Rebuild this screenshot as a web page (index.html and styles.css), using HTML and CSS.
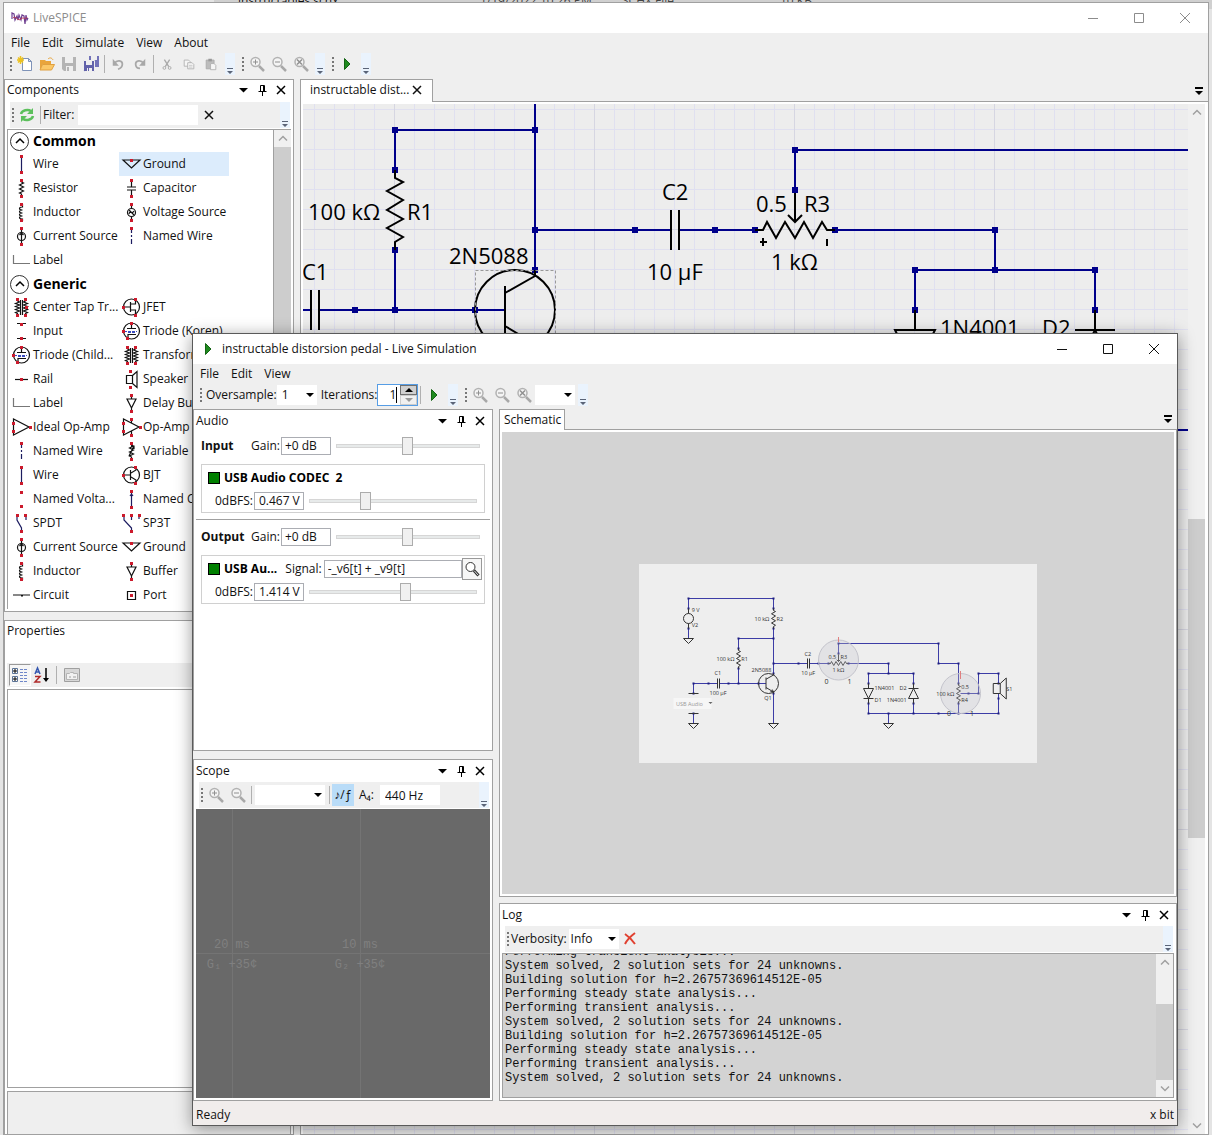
FILE: index.html
```html
<!DOCTYPE html>
<html lang="en">

<head>
    <meta charset="UTF-8">
    <meta name="viewport" content="width=device-width, initial-scale=1.0">
    <title>LiveSPICE</title>
    <link rel="stylesheet" href="styles.css">
</head>

<body>
    <!-- shared icons and circuit symbols -->
    <svg class="defs" aria-hidden="true">
        <!-- window chrome -->
        <symbol id="i-min" viewBox="0 0 12 12"><path class="line" d="M1 6.500h10" /></symbol>
        <symbol id="i-max" viewBox="0 0 12 12"><path class="line" d="M1.500 1.500h9v9h-9z" /></symbol>
        <symbol id="i-x" viewBox="0 0 12 12"><path class="line" d="M1 1l10 10M11 1L1 11" /></symbol>
        <symbol id="i-down" viewBox="0 0 12 12"><path fill="currentColor" d="M2 4h9L6.500 8.500z" /></symbol>
        <symbol id="i-pin" viewBox="0 0 12 12"><path class="line" d="M4.500 7V1.500h4V7M2.500 7.500h8M6.500 8v4" /><path class="line" d="M7.500 2v5" /></symbol>
        <symbol id="i-close" viewBox="0 0 12 12"><path class="thick" d="M2 2l8 8M10 2l-8 8" /></symbol>
        <symbol id="i-over" viewBox="0 0 8 8"><path fill="#5a6478" d="M1 1h6v1H1zM1 4h6L4 7z" /></symbol>
        <symbol id="i-tabs" viewBox="0 0 10 10"><path fill="#000" d="M1 1h8v2H1zM1 5h8L5 9z" /></symbol>
        <symbol id="i-up" viewBox="0 0 10 10"><path class="thick" d="M1 7l4-4 4 4" /></symbol>
        <symbol id="i-dn" viewBox="0 0 10 10"><path class="thick" d="M1 3l4 4 4-4" /></symbol>
        <!-- toolbar -->
        <symbol id="i-new" viewBox="0 0 16 16"><path fill="#fff" stroke="#7f93b8" d="M5.500 2.500h6l3 3v9h-9z" /><path fill="#dfe8f5" stroke="#7f93b8" d="M11.500 2.500v3h3z" /><path stroke="#edc21e" stroke-width="1.500" d="M3.500 0v8M0 4h7M1 1.500l5 5M6 1.500l-5 5" /></symbol>
        <symbol id="i-open" viewBox="0 0 16 16"><path fill="#e9a53c" d="M1 4h5l1 1h5v3H4l-3 6z" /><path fill="#fbc868" stroke="#e0a040" d="M3.500 8.500h12l-3 5.500H1z" /><path fill="none" stroke="#e9a53c" d="M9 3c2-2 4-1 5 1" /></symbol>
        <symbol id="i-save" viewBox="0 0 16 16"><path fill="#b4b4b4" d="M1 1h14v14H3l-2-2z" /><path fill="#efefef" d="M4 1h8v6H4zM5 10h7v5H5z" /><path fill="#b4b4b4" d="M6 11h2v4H6z" /></symbol>
        <symbol id="i-saveall" viewBox="0 0 16 16"><path fill="#7272b8" d="M6 0h10v11H6z" /><path fill="#efefef" d="M8 0h6v4H8z" /><path fill="#6262aa" stroke="#efefef" d="M.500 4.500h11v11h-10l-1-1z" /><path fill="#efefef" d="M3 5h6v4H3zM4 12h5v4H4z" /><path fill="#6262aa" d="M5 12h1v3H5z" /></symbol>
        <symbol id="i-undo" viewBox="0 0 16 16"><path fill="none" stroke="#a8a8a8" stroke-width="2" d="M4 7c3-4 9-3 9 1 0 3-2 5-5 6" /><path fill="#a8a8a8" d="M2 2v8h7z" /></symbol>
        <symbol id="i-redo" viewBox="0 0 16 16"><path fill="none" stroke="#a8a8a8" stroke-width="2" d="M12 7c-3-4-9-3-9 1 0 3 2 5 5 5" /><path fill="#a8a8a8" d="M14 2v8H7z" /></symbol>
        <symbol id="i-cut" viewBox="0 0 16 16"><path fill="none" stroke="#a8a8a8" stroke-width="1.500" d="M5 3l5 8M11 3l-5 8" /><circle cx="5" cy="12.500" r="1.600" fill="none" stroke="#a8a8a8" /><circle cx="11" cy="12.500" r="1.600" fill="none" stroke="#a8a8a8" /></symbol>
        <symbol id="i-copy" viewBox="0 0 16 16"><path fill="#f6f6f6" stroke="#b0b0b0" d="M2.500 3.500h5l2 2v5h-7z" /><path fill="#f6f6f6" stroke="#b0b0b0" d="M6.500 6.500h5l2 2v5h-7z" /><path stroke="#c4c4c4" d="M8 9.500h4M8 11.500h4" /></symbol>
        <symbol id="i-paste" viewBox="0 0 16 16"><path fill="#bcbcbc" stroke="#aaa" d="M2.500 3.500h9v10h-9z" /><path fill="#999" d="M5 2h4v3H5z" /><path fill="#f6f6f6" stroke="#b0b0b0" d="M7.500 7.500h4l2 2v5h-6z" /></symbol>
        <symbol id="i-zoomin" viewBox="0 0 16 16"><circle cx="6.500" cy="6" r="4.500" fill="#f4f4f4" stroke="#b2b2b2" stroke-width="1.500" /><path stroke="#a8a8a8" stroke-width="2.500" d="M10 10l5 5" /><path stroke="#909090" d="M4 6h5M6.500 3.500v5" /></symbol>
        <symbol id="i-zoomout" viewBox="0 0 16 16"><circle cx="6.500" cy="6" r="4.500" fill="#f4f4f4" stroke="#b2b2b2" stroke-width="1.500" /><path stroke="#a8a8a8" stroke-width="2.500" d="M10 10l5 5" /><path stroke="#909090" d="M4 6h5" /></symbol>
        <symbol id="i-zoomfit" viewBox="0 0 16 16"><circle cx="6.500" cy="6" r="4.500" fill="#f4f4f4" stroke="#b2b2b2" stroke-width="1.500" /><path stroke="#a8a8a8" stroke-width="2.500" d="M10 10l5 5" /><path stroke="#909090" stroke-width="1.500" d="M4 3.500l5 5M9 3.500l-5 5" /></symbol>
        <symbol id="i-play" viewBox="0 0 16 16"><path fill="#1f8a1f" stroke="#146414" d="M5.500 2.500v11L11 8z" /></symbol>
        <symbol id="i-refresh" viewBox="0 0 16 16"><path fill="none" stroke="#5cc05c" stroke-width="2.500" d="M2 7c1-4 7-5 10-3M14 9c-1 4-7 5-10 3" /><path fill="#5cc05c" d="M14 1v6H8zM2 15V9h6z" /></symbol>
        <symbol id="i-find" viewBox="0 0 16 16"><circle cx="6.500" cy="6" r="4.500" fill="#fff" stroke="#333" /><path stroke="#333" stroke-width="3" d="M10 9.500l4.500 5" /><path stroke="#ddd" d="M10.500 10l3.500 4" /></symbol>
        <symbol id="i-del" viewBox="0 0 16 16"><path fill="none" stroke="#e04030" stroke-width="2" d="M3 3c3 2 7 6 10 10M13 2C9 5 5 9 3 13" /></symbol>
        <symbol id="i-cat" viewBox="0 0 18 18"><path fill="#fff" stroke="#5b7396" d="M1.500 2.500h5v5h-5zM1.500 10.500h5v5h-5z" /><path stroke="#000" d="M2 5h4M4 3v4M2 13h4M4 11v4" /><path stroke="#6f87c9" stroke-dasharray="3 1" d="M9 3.500h8M9 6.500h8M9 9.500h8M9 12.500h8M9 15.500h8" /></symbol>
        <symbol id="i-az" viewBox="0 0 18 18"><path fill="none" stroke="#3557b0" stroke-width="1.500" d="M2 8l2.500-6L7 8M3 6h3" /><path fill="none" stroke="#b02a2a" stroke-width="1.500" d="M2 10.500h5L2 16h5.500" /><path stroke="#000" stroke-width="1.500" d="M13 2v12" /><path d="M10 12h6l-3 4z" /></symbol>
        <symbol id="i-pages" viewBox="0 0 18 18"><path fill="#d8d8d8" stroke="#a0a0a0" d="M1.500 2.500h15v13h-15z" /><path fill="#f2f2f2" stroke="#b4b4b4" d="M3.500 7.500h3l1-1h3v1h4v6h-11z" /><path stroke="#a0a0a0" d="M6 11h2M10 11h3" /></symbol>
        <!-- component list, 24x24 -->
        <symbol id="c-wire" viewBox="0 0 24 24"><path class="w" d="M12.500 4v16" /><path class="pin" d="M11 3h3v3h-3zM11 19h3v3h-3z" /></symbol>
        <symbol id="c-nwire" viewBox="0 0 24 24"><path class="w" stroke-dasharray="5 2 2 2" d="M12.500 4v17" /><path class="pin" d="M11 3h3v3h-3z" /></symbol>
        <symbol id="c-gnd" viewBox="0 0 24 24"><path class="k" d="M4 8h17l-8.500 8z" /><path class="pin" d="M11 7h3v3h-3z" /></symbol>
        <symbol id="c-res" viewBox="0 0 24 24"><path class="k" d="M12.500 4v2l2 1-4 2 4 2-4 2 4 2-4 2 2 1v3" /><path class="pin" d="M11 3h3v3h-3zM11 19h3v3h-3z" /></symbol>
        <symbol id="c-varres" viewBox="0 0 24 24"><path class="k" d="M12.500 4v2l2 1-4 2 4 2-4 2 4 2-4 2 2 1v3M10 17l5-10M15 10V7h-3" /><path class="pin" d="M11 3h3v3h-3zM11 19h3v3h-3z" /></symbol>
        <symbol id="c-cap" viewBox="0 0 24 24"><path class="k" d="M12.500 4v7M8 11h9M8 14h9M12.500 14v7" /><path class="pin" d="M11 3h3v3h-3zM11 19h3v3h-3z" /></symbol>
        <symbol id="c-ind" viewBox="0 0 24 24"><path class="k" d="M13.500 4v3c-4 0-4 3 0 3-4 0-4 3 0 3-4 0-4 3 0 3-4 0-4 3 0 3v2" /><path class="pin" d="M11 3h3v3h-3zM11 19h3v3h-3z" /></symbol>
        <symbol id="c-vs" viewBox="0 0 24 24"><circle class="k" cx="12.500" cy="12.500" r="4" /><path class="k" d="M12.500 4v4M12.500 17v4M10 14c1-4 3 1 5-3M10 10l5 5" /><path class="pin" d="M11 3h3v3h-3zM11 19h3v3h-3z" /></symbol>
        <symbol id="c-cs" viewBox="0 0 24 24"><circle class="k" cx="12.500" cy="12.500" r="4" /><path class="k" d="M12.500 4v17M10.500 11l2-2 2 2" /><path class="pin" d="M11 3h3v3h-3zM11 19h3v3h-3z" /></symbol>
        <symbol id="c-label" viewBox="0 0 24 24"><path class="g" d="M4.500 7v8.500H21" /></symbol>
        <symbol id="c-xfmr" viewBox="0 0 24 24"><path class="k" d="M11.500 5v15M13.500 5v15M8.500 4v2l2 1-4 1.500 4 1.500-4 1.500 4 1.500-4 1.500 4 1.500-4 1.500 2 1v2M16.500 4v2l-2 1 4 1.500-4 1.500 4 1.500-4 1.500 4 1.500-4 1.500 4 1.500-2 1v2" /><path class="pin" d="M7 3h3v3H7zM7 19h3v3H7zM15 3h3v3h-3zM15 19h3v3h-3z" /></symbol>
        <symbol id="c-ctap" viewBox="0 0 24 24"><use href="#c-xfmr" /><path class="pin" d="M16 11h3v3h-3z" /></symbol>
        <symbol id="c-input" viewBox="0 0 24 24"><path class="k" d="M8 4.500h9M8 19.500h9" /><path class="pin" d="M11 4h3v3h-3zM11 18h3v3h-3z" /></symbol>
        <symbol id="c-jfet" viewBox="0 0 24 24"><circle class="k" cx="12.500" cy="12" r="8" /><path class="k" d="M5 12h6M11.500 7v10M12 9h4.500V5M12 15h4.500v4" /><path class="pin" d="M3 11h3v3H3zM15 3h3v3h-3zM15 19h3v3h-3z" /></symbol>
        <symbol id="c-bjt" viewBox="0 0 24 24"><circle class="k" cx="12.500" cy="12" r="8" /><path class="k" d="M5 12h6M11.500 7v10M12 10l5-3V5M12 14l5 3v2" /><path class="pin" d="M3 11h3v3H3zM15 3h3v3h-3zM15 19h3v3h-3z" /></symbol>
        <symbol id="c-triode" viewBox="0 0 24 24"><circle class="k" cx="12.500" cy="12" r="8" /><path class="k" d="M12.500 4v5M8 9.500h9M9 18v-2.500h8" /><path class="b" stroke-dasharray="3 1" d="M5 12.500h3h10M9 13.500h8" /><path class="pin" d="M11 3h3v3h-3zM3 11h3v3H3zM7 18h3v3H7z" /></symbol>
        <symbol id="c-rail" viewBox="0 0 24 24"><path class="k" d="M6 12.500h13" /><path class="pin" d="M11 11h3v3h-3z" /></symbol>
        <symbol id="c-speaker" viewBox="0 0 24 24"><path class="k" d="M7.500 8.500h6v8h-6zM13.500 8.500l4.500-4v16l-4.500-4" /><path class="pin" d="M10 3h3v3h-3zM10 19h3v3h-3z" /></symbol>
        <symbol id="c-buf" viewBox="0 0 24 24"><path class="k" d="M12.500 4v4M8 8h9l-4.500 9zM12.500 17v4" /><path class="pin" d="M11 3h3v3h-3zM11 19h3v3h-3z" /></symbol>
        <symbol id="c-iopamp" viewBox="0 0 24 24"><path class="k" d="M4.500 4v16L20 12z" /><path class="pin" d="M3 7h3v3H3zM3 15h3v3H3zM20 11h3v3h-3z" /></symbol>
        <symbol id="c-opamp" viewBox="0 0 24 24"><path class="k" d="M4.500 4v16L20 12zM12.500 4v4M12.500 16v5" /><path class="pin" d="M3 7h3v3H3zM3 15h3v3H3zM20 11h3v3h-3zM11 3h3v3h-3zM11 19h3v3h-3z" /></symbol>
        <symbol id="c-nv" viewBox="0 0 24 24"><path class="pin" d="M11 4h3v3h-3zM11 18h3v3h-3z" /></symbol>
        <symbol id="c-nc" viewBox="0 0 24 24"><path class="w" d="M12.500 4v16M11 9l1.500-2L14 9" /><path class="pin" d="M11 3h3v3h-3zM11 19h3v3h-3z" /></symbol>
        <symbol id="c-spdt" viewBox="0 0 24 24"><path class="w" d="M8 5v4l4.500 8v3M17 5v4" /><path class="pin" d="M7 3h3v3H7zM15 3h3v3h-3zM11 19h3v3h-3z" /></symbol>
        <symbol id="c-sp3t" viewBox="0 0 24 24"><path class="w" d="M5 5v4l7.500 8v3M12.500 5v4M20 5v3" /><path class="pin" d="M3 3h3v3H3zM11 3h3v3h-3zM19 3h3v3h-3zM11 19h3v3h-3z" /></symbol>
        <symbol id="c-circ" viewBox="0 0 24 24"><path class="k" d="M4 12h17M12 13h2" /></symbol>
        <symbol id="c-port" viewBox="0 0 24 24"><path class="k" d="M8.500 8.500h8v8h-8z" /><path class="pin" d="M11 11h3v3h-3z" /></symbol>
        <!-- schematic symbols, centred on the part -->
        <path id="s-res" d="M0 -40V-32L8 -28L-8 -19L8 -10L-8 0L8 9L-8 18L8 27L0 32V40" />
        <path id="s-cap" d="M-4 -20V20M4 -20V20" />
        <path id="s-gnd" d="M-20 0H20L0 20Z" />
        <path id="s-diode" d="M0 -40V-20M-20 -20H20L0 20ZM-20 20H20M0 20V40" />
        <g id="s-bjt"><circle r="40" /><path d="M-10 -24V24M-10 -17L20 -34V-40M-10 16L20 34V40M8 32L20 34L15 24" /></g>
    </svg>

    <!-- file list showing above the application -->
    <div class="behind">
        <span class="b-name">instructables.schx</span>
        <span class="b-date">1/19/2022 10:26 PM</span>
        <span class="b-type">SCHX File</span>
        <span>10 KB</span>
    </div>

    <div class="window main-window">
        <header class="titlebar inactive">
            <svg class="app-icon" viewBox="0 0 18 16"><path fill="none" stroke="#6d3d90" stroke-width="1.200" d="M1 9V3l2 1 1 6 2-4 1 4 1-5 2 5 1-5 2 1 1 8 1-9 1 5 1-2" /><path fill="none" stroke="#b9405a" d="M2 8c3-3 5 4 8 1s4 2 6-2" /></svg>
            <h1>LiveSPICE</h1>
            <div class="controls">
                <button aria-label="Minimize"><svg><use href="#i-min" /></svg></button>
                <button aria-label="Maximize"><svg><use href="#i-max" /></svg></button>
                <button aria-label="Close"><svg><use href="#i-x" /></svg></button>
            </div>
        </header>
        <nav class="menu">
            <button>File</button><button>Edit</button><button>Simulate</button><button>View</button><button>About</button>
        </nav>
        <div class="toolbars">
            <div class="toolbar">
                <i class="grip"></i>
                <button class="tool" aria-label="New"><svg><use href="#i-new" /></svg></button>
                <button class="tool" aria-label="Open"><svg><use href="#i-open" /></svg></button>
                <button class="tool" aria-label="Save"><svg><use href="#i-save" /></svg></button>
                <button class="tool" aria-label="Save all"><svg><use href="#i-saveall" /></svg></button>
                <i class="sep"></i>
                <button class="tool small" aria-label="Undo"><svg><use href="#i-undo" /></svg></button>
                <button class="tool small" aria-label="Redo"><svg><use href="#i-redo" /></svg></button>
                <i class="sep"></i>
                <button class="tool small" aria-label="Cut"><svg><use href="#i-cut" /></svg></button>
                <button class="tool small" aria-label="Copy"><svg><use href="#i-copy" /></svg></button>
                <button class="tool small" aria-label="Paste"><svg><use href="#i-paste" /></svg></button>
                <button class="overflow" aria-label="More"><svg><use href="#i-over" /></svg></button>
            </div>
            <div class="toolbar">
                <i class="grip"></i>
                <button class="tool" aria-label="Zoom in"><svg><use href="#i-zoomin" /></svg></button>
                <button class="tool" aria-label="Zoom out"><svg><use href="#i-zoomout" /></svg></button>
                <button class="tool" aria-label="Zoom fit"><svg><use href="#i-zoomfit" /></svg></button>
                <button class="overflow" aria-label="More"><svg><use href="#i-over" /></svg></button>
            </div>
            <div class="toolbar">
                <i class="grip"></i>
                <button class="tool" aria-label="Run"><svg><use href="#i-play" /></svg></button>
                <button class="overflow" aria-label="More"><svg><use href="#i-over" /></svg></button>
            </div>
        </div>

        <div class="dock">
            <div class="side">
                <section class="panel components">
                    <div class="panel-head">
                        <h2>Components</h2>
                        <button aria-label="Options"><svg><use href="#i-down" /></svg></button>
                        <button aria-label="Pin"><svg><use href="#i-pin" /></svg></button>
                        <button aria-label="Close"><svg><use href="#i-close" /></svg></button>
                    </div>
                    <div class="toolbar strip">
                        <i class="grip"></i>
                        <button class="tool" aria-label="Refresh"><svg><use href="#i-refresh" /></svg></button>
                        <i class="sep"></i>
                        <label for="filter">Filter:</label>
                        <input type="text" id="filter" class="filter">
                        <button class="tool clear" aria-label="Clear filter"><svg><use href="#i-close" /></svg></button>
                        <button class="overflow" aria-label="More"><svg><use href="#i-over" /></svg></button>
                    </div>
                    <div class="listbox">
                        <div class="groups">
                            <h3><button class="expander" aria-label="Collapse"><svg><use href="#i-up" /></svg></button>Common</h3>
                            <ul>
                                <li><svg><use href="#c-wire" /></svg><span>Wire</span></li>
                                <li class="selected"><svg><use href="#c-gnd" /></svg><span>Ground</span></li>
                                <li><svg><use href="#c-res" /></svg><span>Resistor</span></li>
                                <li><svg><use href="#c-cap" /></svg><span>Capacitor</span></li>
                                <li><svg><use href="#c-ind" /></svg><span>Inductor</span></li>
                                <li><svg><use href="#c-vs" /></svg><span>Voltage Source</span></li>
                                <li><svg><use href="#c-cs" /></svg><span>Current Source</span></li>
                                <li><svg><use href="#c-nwire" /></svg><span>Named Wire</span></li>
                                <li><svg><use href="#c-label" /></svg><span>Label</span></li>
                            </ul>
                            <h3><button class="expander" aria-label="Collapse"><svg><use href="#i-up" /></svg></button>Generic</h3>
                            <ul>
                                <li><svg><use href="#c-ctap" /></svg><span>Center Tap Tr...</span></li>
                                <li><svg><use href="#c-jfet" /></svg><span>JFET</span></li>
                                <li><svg><use href="#c-input" /></svg><span>Input</span></li>
                                <li><svg><use href="#c-triode" /></svg><span>Triode (Koren)</span></li>
                                <li><svg><use href="#c-triode" /></svg><span>Triode (Child...</span></li>
                                <li><svg><use href="#c-xfmr" /></svg><span>Transformer</span></li>
                                <li><svg><use href="#c-rail" /></svg><span>Rail</span></li>
                                <li><svg><use href="#c-speaker" /></svg><span>Speaker</span></li>
                                <li><svg><use href="#c-label" /></svg><span>Label</span></li>
                                <li><svg><use href="#c-buf" /></svg><span>Delay Buffer</span></li>
                                <li><svg><use href="#c-iopamp" /></svg><span>Ideal Op-Amp</span></li>
                                <li><svg><use href="#c-opamp" /></svg><span>Op-Amp</span></li>
                                <li><svg><use href="#c-nwire" /></svg><span>Named Wire</span></li>
                                <li><svg><use href="#c-varres" /></svg><span>Variable Re...</span></li>
                                <li><svg><use href="#c-wire" /></svg><span>Wire</span></li>
                                <li><svg><use href="#c-bjt" /></svg><span>BJT</span></li>
                                <li><svg><use href="#c-nv" /></svg><span>Named Volta...</span></li>
                                <li><svg><use href="#c-nc" /></svg><span>Named Curr...</span></li>
                                <li><svg><use href="#c-spdt" /></svg><span>SPDT</span></li>
                                <li><svg><use href="#c-sp3t" /></svg><span>SP3T</span></li>
                                <li><svg><use href="#c-cs" /></svg><span>Current Source</span></li>
                                <li><svg><use href="#c-gnd" /></svg><span>Ground</span></li>
                                <li><svg><use href="#c-ind" /></svg><span>Inductor</span></li>
                                <li><svg><use href="#c-buf" /></svg><span>Buffer</span></li>
                                <li><svg><use href="#c-circ" /></svg><span>Circuit</span></li>
                                <li><svg><use href="#c-port" /></svg><span>Port</span></li>
                                <li><svg><use href="#c-res" /></svg></li>
                                <li><svg><use href="#c-cap" /></svg></li>
                            </ul>
                        </div>
                        <div class="scroll">
                            <svg><use href="#i-up" /></svg>
                            <div class="track"><div class="thumb thumb-list"></div></div>
                        </div>
                    </div>
                </section>

                <section class="panel properties">
                    <div class="panel-head">
                        <h2>Properties</h2>
                    </div>
                    <div class="prop-tools">
                        <button class="pressed" aria-label="Categorized"><svg><use href="#i-cat" /></svg></button>
                        <button aria-label="Alphabetical"><svg><use href="#i-az" /></svg></button>
                        <i class="sep"></i>
                        <button aria-label="Property pages"><svg><use href="#i-pages" /></svg></button>
                    </div>
                    <div class="prop-grid"></div>
                    <div class="prop-help"></div>
                </section>
            </div>

            <div class="docs">
                <div class="tabs">
                    <div class="tab"><span>instructable dist...</span><button aria-label="Close tab"><svg><use href="#i-close" /></svg></button></div>
                    <button class="tab-list" aria-label="Documents"><svg><use href="#i-tabs" /></svg></button>
                </div>
                <div class="doc">
                    <div class="canvas">
                        <svg class="schematic">
                            <g transform="translate(92 126)">
                                <g class="wires">
                                    <path d="M0 -60V-100H140M140 -130V46M0 20V80M-95 80H-84M-76 80H110M140 0H276M284 0H368" />
                                    <path d="M400 -40V-80H1200M432 0H600V40M520 100V40H700V100M440 200H1200" />
                                </g>
                                <path class="nodes" d="M0 -100h0M140 -100h0M0 -60h0M0 20h0M-40 80h0M0 80h0M80 80h0M140 0h0M140 40h0M240 0h0M320 0h0M360 0h0M440 0h0M400 -80h0M400 -40h0M600 0h0M600 40h0M520 40h0M700 40h0M520 80h0M700 80h0" />
                                <g class="parts">
                                    <use href="#s-res" y="-20" />
                                    <use href="#s-cap" x="-80" y="80" />
                                    <use href="#s-cap" x="280" />
                                    <use href="#s-bjt" x="120" y="80" />
                                    <use href="#s-res" transform="translate(400 0) rotate(-90)" />
                                    <path d="M400 -37V-8M393 -15l7 7 7 -7M365 12h7M368 8v8M432 9v7" />
                                    <use href="#s-diode" x="520" y="120" />
                                    <use href="#s-diode" transform="translate(700 120) rotate(180)" />
                                </g>
                                <path class="select-box" d="M80.500 40.500h80v80h-80z" />
                                <g class="labels">
                                    <text x="-87" y="-10">100 kΩ</text>
                                    <text x="12" y="-10">R1</text>
                                    <text x="-93" y="50">C1</text>
                                    <text x="54" y="34">2N5088</text>
                                    <text x="267" y="-30">C2</text>
                                    <text x="252" y="50">10 µF</text>
                                    <text x="361" y="-18">0.5</text>
                                    <text x="409" y="-18">R3</text>
                                    <text x="376" y="40">1 kΩ</text>
                                    <text x="545" y="106">1N4001</text>
                                    <text x="647" y="106">D2</text>
                                </g>
                            </g>
                        </svg>
                    </div>
                    <div class="scroll">
                        <svg><use href="#i-up" /></svg>
                        <div class="track"><div class="thumb thumb-doc"></div></div>
                        <svg><use href="#i-dn" /></svg>
                    </div>
                </div>
            </div>
        </div>
    </div>

    <div class="window sim-window">
        <header class="titlebar">
            <svg class="app-icon"><use href="#i-play" /></svg>
            <h1>instructable distorsion pedal - Live Simulation</h1>
            <div class="controls">
                <button aria-label="Minimize"><svg><use href="#i-min" /></svg></button>
                <button aria-label="Maximize"><svg><use href="#i-max" /></svg></button>
                <button aria-label="Close"><svg><use href="#i-x" /></svg></button>
            </div>
        </header>
        <nav class="menu">
            <button>File</button><button>Edit</button><button>View</button>
        </nav>
        <div class="toolbars">
            <div class="toolbar">
                <i class="grip"></i>
                <label for="oversample" class="first">Oversample:</label>
                <span class="combo combo-s"><select id="oversample"><option>1</option><option>2</option><option>4</option></select></span>
                <label for="iterations" class="next">Iterations:</label>
                <span class="spinner">
                    <input type="number" id="iterations" value="1">
                    <span class="spin">
                        <button class="on" aria-label="More iterations"><svg viewBox="0 0 8 4"><path d="M0 4h8L4 0z" /></svg></button>
                        <button aria-label="Fewer iterations"><svg viewBox="0 0 8 4"><path d="M0 0h8L4 4z" /></svg></button>
                    </span>
                </span>
                <i class="sep"></i>
                <button class="tool" aria-label="Run"><svg><use href="#i-play" /></svg></button>
                <button class="overflow" aria-label="More"><svg><use href="#i-over" /></svg></button>
            </div>
            <div class="toolbar">
                <i class="grip"></i>
                <button class="tool" aria-label="Zoom in"><svg><use href="#i-zoomin" /></svg></button>
                <button class="tool" aria-label="Zoom out"><svg><use href="#i-zoomout" /></svg></button>
                <button class="tool" aria-label="Zoom fit"><svg><use href="#i-zoomfit" /></svg></button>
                <span class="combo combo-s"><select aria-label="Zoom"><option></option></select></span>
                <button class="overflow" aria-label="More"><svg><use href="#i-over" /></svg></button>
            </div>
        </div>

        <div class="dock">
            <div class="side">
                <section class="panel audio">
                    <div class="panel-head">
                        <h2>Audio</h2>
                        <button aria-label="Options"><svg><use href="#i-down" /></svg></button>
                        <button aria-label="Pin"><svg><use href="#i-pin" /></svg></button>
                        <button aria-label="Close"><svg><use href="#i-close" /></svg></button>
                    </div>
                    <div class="gain-row">
                        <h3>Input</h3>
                        <label for="in-gain">Gain:</label>
                        <input type="text" id="in-gain" class="value" value="+0 dB">
                        <input type="range" aria-label="Input gain" value="50">
                    </div>
                    <div class="channel">
                        <div class="channel-name"><i class="led"></i><b>USB Audio CODEC&nbsp; 2</b></div>
                        <div class="level">
                            <label for="in-level">0dBFS:</label>
                            <input type="text" id="in-level" class="value" value="0.467 V">
                            <input type="range" aria-label="Input level" value="32">
                        </div>
                    </div>
                    <hr>
                    <div class="gain-row">
                        <h3>Output</h3>
                        <label for="out-gain">Gain:</label>
                        <input type="text" id="out-gain" class="value" value="+0 dB">
                        <input type="range" aria-label="Output gain" value="50">
                    </div>
                    <div class="channel">
                        <div class="channel-name">
                            <i class="led"></i><b>USB Au...</b>
                            <label for="signal">Signal:</label>
                            <input type="text" id="signal" class="signal" value="-_v6[t] + _v9[t]">
                            <button class="find" aria-label="Find signal"><svg><use href="#i-find" /></svg></button>
                        </div>
                        <div class="level">
                            <label for="out-level">0dBFS:</label>
                            <input type="text" id="out-level" class="value" value="1.414 V">
                            <input type="range" aria-label="Output level" value="58">
                        </div>
                    </div>
                </section>

                <section class="panel scope">
                    <div class="panel-head">
                        <h2>Scope</h2>
                        <button aria-label="Options"><svg><use href="#i-down" /></svg></button>
                        <button aria-label="Pin"><svg><use href="#i-pin" /></svg></button>
                        <button aria-label="Close"><svg><use href="#i-close" /></svg></button>
                    </div>
                    <div class="toolbar strip">
                        <i class="grip"></i>
                        <button class="tool" aria-label="Zoom in"><svg><use href="#i-zoomin" /></svg></button>
                        <button class="tool" aria-label="Zoom out"><svg><use href="#i-zoomout" /></svg></button>
                        <i class="sep"></i>
                        <span class="combo combo-l"><select aria-label="Signal"><option></option></select></span>
                        <i class="sep"></i>
                        <button class="tool note">♪/ƒ</button>
                        <label for="tuning">A₄:</label>
                        <input type="text" id="tuning" class="tuning" value="440 Hz">
                        <button class="overflow" aria-label="More"><svg><use href="#i-over" /></svg></button>
                    </div>
                    <svg class="trace">
                        <path d="M36.500 0v1000M164.500 0v1000" />
                        <line x1="0" y1="50%" x2="100%" y2="50%" />
                        <svg y="50%" overflow="visible">
                            <text x="36" y="-6">20 ms</text>
                            <text x="36" y="14">G₁ +35¢</text>
                            <text x="164" y="-6">10 ms</text>
                            <text x="164" y="14">G₂ +35¢</text>
                        </svg>
                    </svg>
                </section>
            </div>

            <div class="side wide">
                <section class="docs">
                    <div class="tabs">
                        <div class="tab">Schematic</div>
                        <button class="tab-list" aria-label="Documents"><svg><use href="#i-tabs" /></svg></button>
                    </div>
                    <div class="doc viewer">
                        <svg class="sheet" viewBox="0 0 398 199">
                            <g transform="translate(-.5 -.5) scale(.25)">
                                <g class="wires">
                                    <path d="M200 180V140H540V180M200 260V300M540 260V440M540 300H400V340M400 420V480M220 520V480H316M324 480H510M540 520V640M220 600V640M540 400H676M684 400H768" />
                                    <path d="M800 360V320H1200V400H1280V480M832 400H1000V440M920 480V440H1100V480M920 560V600H1440V520M1100 560V600M1000 600V640M1280 560V600M1288 520H1360V440H1440V480" />
                                </g>
                                <path class="nodes" d="M200 140h0M540 140h0M200 180h0M200 260h0M540 180h0M540 260h0M540 300h0M400 300h0M400 340h0M400 420h0M400 480h0M360 480h0M280 480h0M220 480h0M220 520h0M220 600h0M480 480h0M540 400h0M540 440h0M540 520h0M640 400h0M720 400h0M760 400h0M840 400h0M800 320h0M800 360h0M1200 320h0M1200 400h0M1280 400h0M1280 480h0M1280 560h0M1280 600h0M1000 400h0M1000 440h0M920 440h0M1100 440h0M920 480h0M1100 480h0M920 560h0M1100 560h0M920 600h0M1000 600h0M1100 600h0M1200 600h0M1440 600h0M1440 540h0M1440 480h0M1440 440h0M1360 440h0M1360 520h0M1320 520h0" />
                                <g class="parts">
                                    <use href="#s-res" x="540" y="220" />
                                    <use href="#s-res" x="400" y="380" />
                                    <use href="#s-res" x="1280" y="520" />
                                    <use href="#s-res" transform="translate(800 400) rotate(-90)" />
                                    <use href="#s-cap" x="320" y="480" />
                                    <use href="#s-cap" x="680" y="400" />
                                    <use href="#s-bjt" x="520" y="480" />
                                    <use href="#s-diode" x="920" y="520" />
                                    <use href="#s-diode" transform="translate(1100 520) rotate(180)" />
                                    <use href="#s-gnd" x="200" y="300" />
                                    <use href="#s-gnd" x="220" y="640" />
                                    <use href="#s-gnd" x="540" y="640" />
                                    <use href="#s-gnd" x="1000" y="640" />
                                    <circle cx="200" cy="220" r="20" />
                                    <path d="M200 180V200M200 240V260M200 520H240M200 600H240M800 363V392M793 385l7 7 7-7" />
                                    <path d="M1419 480h28v40h-28zM1447 480l24-22v84l-24-22" />
                                </g>
                                <circle class="knob" cx="800" cy="386" r="80" />
                                <circle class="knob" cx="1288" cy="520" r="80" />
                                <path class="mark" d="M800 294v20M1288 430v32" />
                                <g class="labels">
                                    <text x="213" y="195">9 V</text>
                                    <text x="213" y="255">V2</text>
                                    <text x="464" y="228">10 kΩ</text>
                                    <text x="552" y="228">R2</text>
                                    <text x="312" y="388">100 kΩ</text>
                                    <text x="411" y="388">R1</text>
                                    <text x="452" y="432">2N5088</text>
                                    <text x="304" y="447">C1</text>
                                    <text x="284" y="527">100 µF</text>
                                    <text x="503" y="544">Q1</text>
                                    <text x="664" y="368">C2</text>
                                    <text x="651" y="447">10 µF</text>
                                    <text x="760" y="380">0.5</text>
                                    <text x="808" y="380">R3</text>
                                    <text x="776" y="435">1 kΩ</text>
                                    <text x="944" y="504">1N4001</text>
                                    <text x="1044" y="504">D2</text>
                                    <text x="944" y="552">D1</text>
                                    <text x="993" y="552">1N4001</text>
                                    <text x="1191" y="528">100 kΩ</text>
                                    <text x="1291" y="502">0.5</text>
                                    <text x="1291" y="552">R4</text>
                                    <text x="1471" y="508">S1</text>
                                    <g class="dial">
                                        <text x="744" y="480">0</text>
                                        <text x="836" y="480">1</text>
                                        <text x="1234" y="610">0</text>
                                        <text x="1326" y="610">1</text>
                                    </g>
                                </g>
                                <rect class="device" x="140" y="538" width="152" height="44" />
                                <text class="device-name" x="150" y="568">USB Audio</text>
                                <path class="device-arrow" d="M280 554h16l-8 8z" />
                            </g>
                        </svg>
                    </div>
                </section>

                <section class="panel log">
                    <div class="panel-head">
                        <h2>Log</h2>
                        <button aria-label="Options"><svg><use href="#i-down" /></svg></button>
                        <button aria-label="Pin"><svg><use href="#i-pin" /></svg></button>
                        <button aria-label="Close"><svg><use href="#i-close" /></svg></button>
                    </div>
                    <div class="toolbar strip">
                        <i class="grip"></i>
                        <label for="verbosity">Verbosity:</label>
                        <span class="combo combo-m"><select id="verbosity"><option>Info</option><option>Warning</option><option>Error</option></select></span>
                        <button class="tool" aria-label="Clear log"><svg><use href="#i-del" /></svg></button>
                        <button class="overflow" aria-label="More"><svg><use href="#i-over" /></svg></button>
                    </div>
                    <div class="log-box">
                        <pre>Performing transient analysis...
System solved, 2 solution sets for 24 unknowns.
Building solution for h=2.26757369614512E-05
Performing steady state analysis...
Performing transient analysis...
System solved, 2 solution sets for 24 unknowns.
Building solution for h=2.26757369614512E-05
Performing steady state analysis...
Performing transient analysis...
System solved, 2 solution sets for 24 unknowns.</pre>
                        <div class="scroll">
                            <svg><use href="#i-up" /></svg>
                            <div class="track"><div class="thumb thumb-log"></div></div>
                            <svg><use href="#i-dn" /></svg>
                        </div>
                    </div>
                </section>
            </div>
        </div>
        <footer class="status"><span>Ready</span><span>x bit</span></footer>
    </div>
</body>

</html>
```
FILE: styles.css
```css
* {
    box-sizing: border-box;
}

body {
    margin: 0;
    height: 100vh;
    overflow: hidden;
    position: relative;
    background: #e4e4e4;
    color: #111;
    font-family: "Open Sans", "Noto Sans", sans-serif;
    font-size: 12px;
    line-height: 16px;
}

h1, h2, h3, ul, pre {
    margin: 0;
    padding: 0;
    font-size: 12px;
    font-weight: normal;
}

button, input, select {
    margin: 0;
    padding: 0;
    border: 0;
    border-radius: 0;
    background: none;
    color: inherit;
    font: inherit;
}

.defs {
    position: absolute;
    width: 0;
    height: 0;
}

/* icon strokes */
.line {
    fill: none;
    stroke: currentColor;
}

.thick {
    fill: none;
    stroke: currentColor;
    stroke-width: 1.5;
}

.k, .w, .g, .b {
    fill: none;
    stroke: #111;
    stroke-width: 1.2;
}

.w {
    stroke: #1c1c60;
}

.g {
    stroke: #777;
}

.b {
    stroke: #3a4cc0;
}

.pin {
    fill: #cc1a2c;
}

/* file list above the window */
.behind {
    position: absolute;
    top: -7px;
    left: 214px;
    right: 0;
    display: flex;
    padding-left: 24px;
    background: #d0d0d0;
    white-space: nowrap;
    color: #444;
}

.b-name {
    width: 242px;
    color: #111;
}

.b-date {
    width: 142px;
}

.b-type {
    width: 158px;
}

/* windows */
.window {
    position: absolute;
    display: flex;
    flex-direction: column;
    background: #efefef;
    border: 1px solid #a0a0a0;
}

.main-window {
    top: 2px;
    left: 3px;
    right: 3px;
    bottom: -1px;
}

.sim-window {
    top: 333px;
    left: 192px;
    right: 34px;
    bottom: 9px;
    border-color: #5a5a5a;
    box-shadow: 0 3px 16px rgba(0, 0, 0, 0.4);
}

.titlebar {
    display: flex;
    align-items: center;
    flex: 0 0 30px;
    padding-left: 7px;
    background: #fff;
}

.titlebar h1 {
    flex: 1;
}

.inactive {
    color: #8c8c8c;
}

.app-icon {
    width: 18px;
    height: 16px;
    margin-right: 4px;
}

.sim-window .app-icon {
    width: 16px;
    margin-right: 6px;
}

.controls {
    display: flex;
    align-self: stretch;
}

.controls button {
    width: 46px;
}

.controls svg, .panel-head svg {
    display: block;
    width: 12px;
    height: 12px;
    margin: auto;
}

.menu {
    display: flex;
    flex: 0 0 20px;
    padding-left: 1px;
}

.menu button {
    padding: 0 6px;
}

/* toolbars */
.toolbars {
    display: flex;
    gap: 5px;
    flex: 0 0 26px;
    padding-left: 4px;
}

.sim-window .toolbars {
    flex-basis: 25px;
    padding-left: 5px;
}

.toolbar {
    display: flex;
    align-items: center;
    height: 22px;
}

.grip {
    flex: none;
    width: 2px;
    height: 15px;
    margin: 0 2px;
    background: repeating-linear-gradient(#777 0 2px, transparent 2px 4px);
}

.sep {
    flex: none;
    width: 1px;
    height: 18px;
    margin: 0 2px;
    background: #b0b0b0;
}

.tool {
    flex: none;
    width: 22px;
    height: 22px;
}

.tool svg {
    display: block;
    width: 16px;
    height: 16px;
    margin: auto;
}

.small svg {
    width: 14px;
    height: 14px;
}

.overflow {
    display: flex;
    align-items: flex-end;
    justify-content: center;
    align-self: stretch;
    flex: none;
    width: 10px;
    margin-left: 3px;
    background: #eaf3fd;
}

.overflow svg {
    width: 8px;
    height: 8px;
}

.strip {
    flex: 0 0 26px;
    margin: 0 1px 1px 3px;
    background: #efefef;
}

.strip .overflow {
    margin-left: auto;
}

.filter {
    width: 120px;
    height: 20px;
    margin-left: 4px;
    background: #fff;
}

.clear svg {
    width: 12px;
    height: 12px;
}

.combo {
    position: relative;
    flex: none;
    height: 20px;
    background: #fff;
}

.combo select {
    appearance: none;
    width: 100%;
    height: 20px;
    padding-left: 5px;
}

.combo::after {
    content: "";
    position: absolute;
    right: 3px;
    top: 8px;
    border: 4px solid transparent;
    border-top-color: #000;
    border-bottom: 0;
    pointer-events: none;
}

.combo-s {
    width: 40px;
}

.combo-m {
    width: 50px;
    margin-left: 2px;
}

.combo-m select {
    padding-left: 2px;
}

.combo-l {
    width: 70px;
    margin: 0 2px 0 1px;
}

.first {
    margin-left: 2px;
}

.next {
    margin-left: 4px;
}

.spinner {
    display: flex;
    width: 41px;
    height: 22px;
    border: 1px solid #569de5;
    background: #fff;
}

.spinner input {
    appearance: textfield;
    flex: 1;
    min-width: 0;
    margin: 2px 3px 2px 0;
    border-right: 1px solid #000;
    text-align: right;
}

.spinner input::-webkit-inner-spin-button {
    display: none;
}

.spin {
    display: flex;
    flex-direction: column;
    width: 17px;
}

.spin button {
    display: flex;
    align-items: center;
    justify-content: center;
    flex: 1;
    border: 1px solid #ccc;
    background: #f0f0f0;
    fill: #999;
}

.spin .on {
    border-color: #707070;
    background: #d0d0d0;
    fill: #000;
}

.spin svg {
    width: 8px;
    height: 4px;
}

/* docking */
.dock {
    display: flex;
    flex: 1;
    gap: 6px;
    min-height: 0;
}

.side {
    display: flex;
    flex-direction: column;
    flex: 0 0 290px;
    gap: 8px;
    min-width: 0;
}

.sim-window .side {
    flex-basis: 300px;
}

.sim-window .wide {
    flex: 1;
    gap: 6px;
}

.panel {
    display: flex;
    flex-direction: column;
    min-height: 0;
    padding: 0 2px;
    border: 1px solid #a0a0a0;
    background: #fff;
    overflow: hidden;
}

.panel-head {
    display: flex;
    align-items: center;
    flex: 0 0 22px;
    padding-right: 1px;
}

.panel-head h2 {
    flex: 1;
}

.panel-head button {
    width: 19px;
    color: #000;
}

.components {
    flex: 0 0 533px;
}

.components .panel-head, .properties .panel-head {
    padding-bottom: 2px;
}

.listbox {
    display: flex;
    flex: 1;
    min-height: 0;
    margin-bottom: 2px;
    border: 1px solid #a0a0a0;
    border-width: 1px 0 0 1px;
}

.groups {
    flex: 1;
    padding-left: 1px;
    border-right: 1px solid #a0a0a0;
    overflow: hidden;
}

.groups h3 {
    display: flex;
    align-items: center;
    height: 22px;
    font-size: 14px;
    font-weight: bold;
    color: #000;
}

.groups ul + h3 {
    margin-top: 1px;
}

.expander {
    width: 19px;
    height: 19px;
    margin: 0 4px 0 1px;
    border: 1px solid #333;
    border-radius: 50%;
    background: #fff;
}

.expander svg {
    display: block;
    width: 10px;
    height: 10px;
    margin: auto;
}

.groups ul {
    display: grid;
    grid-template-columns: 110px 110px;
    list-style: none;
}

.groups li {
    display: flex;
    align-items: center;
    height: 24px;
    white-space: nowrap;
}

.groups li svg {
    flex: none;
    width: 24px;
    height: 24px;
}

.selected {
    background: #dcecfc;
}

.scroll {
    display: flex;
    flex-direction: column;
    flex: 0 0 17px;
    background: #f0f0f0;
    color: #a0a0a0;
}

.scroll svg {
    flex: none;
    width: 10px;
    height: 17px;
    margin: 0 auto;
}

.track {
    flex: 1;
    position: relative;
}

.thumb {
    position: absolute;
    left: 0;
    right: 0;
    background: #cdcdcd;
}

.thumb-list {
    top: 0;
    bottom: 0;
}

.thumb-doc {
    top: 40%;
    height: 32%;
}

.thumb-log {
    top: 30%;
    height: 70%;
}

/* properties */
.properties {
    flex: 1;
}

.prop-tools {
    display: flex;
    align-items: center;
    flex: 0 0 24px;
    margin-top: 20px;
    padding-left: 2px;
    background: #efefef;
}

.prop-tools button {
    width: 22px;
    height: 22px;
    border: 1px solid transparent;
}

.prop-tools svg {
    display: block;
    width: 18px;
    height: 18px;
    margin: auto;
}

.prop-tools .sep {
    margin: 0 4px 0 3px;
}

.prop-tools .pressed {
    border-color: #999 #fff #fff #999;
    background: #f6f6f6;
}

.prop-grid {
    flex: 1;
    margin-top: 2px;
    border: 1px solid #a0a0a0;
}

.prop-help {
    flex: 0 0 52px;
    margin: 3px 0 -9px;
    border: 1px solid #a0a0a0;
    background: #efefef;
}

/* documents */
.docs {
    display: flex;
    flex-direction: column;
    flex: 1;
    min-width: 0;
    min-height: 0;
}

.tabs {
    display: flex;
    align-items: flex-end;
    justify-content: space-between;
    flex: 0 0 22px;
}

.tab {
    display: flex;
    align-items: center;
    height: 23px;
    margin-bottom: -1px;
    padding: 0 9px 2px;
    border: 1px solid #a0a0a0;
    border-bottom: 0;
    background: #fff;
    z-index: 1;
}

.tab button {
    margin-left: 2px;
}

.tab svg {
    display: block;
    width: 12px;
    height: 12px;
}

.tab-list {
    padding: 5px 4px;
}

.tab-list svg {
    display: block;
    width: 10px;
    height: 10px;
}

.sim-window .tabs {
    flex-basis: 20px;
}

.sim-window .tab {
    height: 21px;
    padding: 0 3px 0 4px;
}

.doc {
    display: flex;
    flex: 1;
    min-height: 0;
    padding: 2px 3px 2px 2px;
    border: 1px solid #a0a0a0;
    border-right: 0;
    background: #fff;
}

.main-window .doc {
    padding-bottom: 0;
}

.canvas {
    flex: 1;
    min-width: 0;
    background-color: #ededed;
    background-image:
        linear-gradient(#d6d6e2 1px, transparent 1px),
        linear-gradient(90deg, #d6d6e2 1px, transparent 1px),
        linear-gradient(#e0e0f0 1px, transparent 1px),
        linear-gradient(90deg, #e0e0f0 1px, transparent 1px);
    background-size: 200px 200px, 200px 200px, 20px 20px, 20px 20px;
    background-position: 91px 125px, 91px 125px, 11px 5px, 11px 5px;
}

.schematic {
    display: block;
    width: 100%;
    height: 100%;
}

.wires path, .parts, .parts use, .nodes, .knob, .mark {
    fill: none;
    vector-effect: non-scaling-stroke;
}

.wires path {
    stroke: #00008b;
    stroke-width: 2;
}

.nodes {
    stroke: #00008b;
    stroke-width: 6;
    stroke-linecap: square;
}

.parts {
    stroke: #000;
    stroke-width: 2;
}

.select-box {
    fill: none;
    stroke: #999;
    stroke-dasharray: 3 2;
}

.labels text {
    font-size: 22px;
    fill: #000;
}

.viewer {
    align-items: center;
    justify-content: center;
    padding: 2px;
    background: #d3d3d3;
    border-right: 1px solid #a0a0a0;
    box-shadow: inset 0 0 0 2px #fff;
}

.sheet {
    width: 398px;
    height: 199px;
    background: #eee;
}

.sheet .wires path {
    stroke: #3c3ca6;
    stroke-width: 1;
}

.sheet .nodes {
    stroke: #1c1c80;
    stroke-width: 2;
}

.sheet .parts {
    stroke: #333;
    stroke-width: 4;
}

.sheet .labels text {
    fill: #333;
}

.sheet .dial text {
    font-size: 28px;
}

.knob {
    fill: rgba(200, 200, 210, 0.3);
    stroke: #c4c4cc;
    stroke-width: 1;
}

.mark {
    stroke: #e08080;
    stroke-width: 1;
}

.device {
    fill: #f6f6f6;
}

.device-name {
    font-size: 22px;
    fill: #999;
}

.device-arrow {
    fill: #666;
}

/* audio */
.audio, .scope {
    flex: 1;
}

.gain-row {
    display: flex;
    align-items: center;
    flex: 0 0 27px;
    padding: 0 10px 0 5px;
}

.gain-row h3 {
    width: 50px;
    font-weight: bold;
}

.gain-row .value {
    padding-left: 3px;
}

.value {
    width: 50px;
    height: 18px;
    margin-left: 1px;
    padding-left: 4px;
    border: 1px solid #abadb3;
    background: #fff;
}

input[type="range"] {
    appearance: none;
    flex: 1;
    min-width: 0;
    height: 18px;
    margin-left: 5px;
}

input[type="range"]::-webkit-slider-runnable-track {
    height: 4px;
    border: 1px solid #d6d6d6;
    background: #e7eaea;
}

input[type="range"]::-webkit-slider-thumb {
    appearance: none;
    width: 11px;
    height: 18px;
    margin-top: -8px;
    border: 1px solid #acacac;
    background: #f0f0f0;
}

.channel {
    display: flex;
    flex-direction: column;
    justify-content: center;
    flex: 0 0 49px;
    margin: 5px 5px 6px;
    padding: 0 0 0 6px;
    border: 1px solid #d0d0d0;
}

.channel-name {
    display: flex;
    align-items: center;
    height: 24px;
}

.channel-name b {
    color: #000;
}

.channel-name label {
    margin-left: 8px;
}

.led {
    width: 12px;
    height: 12px;
    margin-right: 4px;
    border: 1px solid #000;
    background: #008000;
}

.level {
    display: flex;
    align-items: center;
    height: 22px;
    padding: 0 7px;
}

.signal {
    flex: 1;
    min-width: 0;
    height: 18px;
    margin-left: 2px;
    padding-left: 3px;
    border: 1px solid #abadb3;
}

.find {
    width: 20px;
    height: 22px;
    margin-right: 2px;
    border: 1px solid #999;
    background: #f6f6f6;
}

.find svg {
    display: block;
    width: 16px;
    height: 16px;
    margin: auto;
}

.audio hr {
    flex: none;
    width: 100%;
    height: 1px;
    margin: 0 0 3px;
    border: 0;
    background: #a0a0a0;
}

/* scope */
.note {
    background: #b9dcf8;
    margin-right: 5px;
}

.tuning {
    width: 60px;
    height: 20px;
    margin-left: 6px;
    padding-left: 5px;
    background: #fff;
}

.trace {
    flex: 1;
    width: 100%;
    min-height: 0;
    margin-bottom: 2px;
    background: #696969;
    stroke: #747474;
}

.trace text {
    font-family: "Liberation Mono", monospace;
    font-size: 12px;
    text-anchor: middle;
    fill: #808080;
    stroke: none;
}

/* log */
.log {
    flex: 0 0 198px;
}

.log-box {
    display: flex;
    flex: 1;
    min-height: 0;
    margin-bottom: 2px;
    border: 1px solid #a0a0a0;
    background: #d3d3d3;
    overflow: hidden;
}

.log-box pre {
    align-self: flex-end;
    flex: 1;
    padding: 0 2px 12px;
    font-family: "Liberation Mono", monospace;
    line-height: 14px;
}

.status {
    display: flex;
    align-items: center;
    justify-content: space-between;
    flex: 0 0 24px;
    padding: 3px 3px 0;
    background: #f1edec;
}
```
